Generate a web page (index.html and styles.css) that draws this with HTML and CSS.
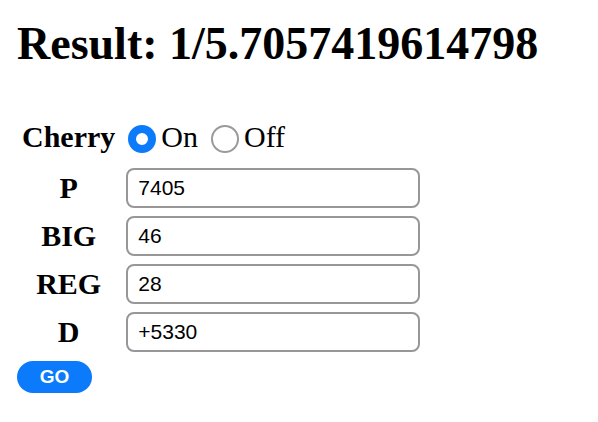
FILE: index.html
```html
<!DOCTYPE html>
<html>
<head>
<meta charset="utf-8">
<link rel="stylesheet" href="styles.css">
</head>
<body>
<h1 class="result">Result: 1/5.7057419614798</h1>
<form class="form">
  <div class="label">Cherry</div>
  <div class="radios">
    <span class="radio radio-on"></span><span class="opt">On</span>
    <span class="radio radio-off"></span><span class="opt">Off</span>
  </div>
  <div class="label">P</div>
  <input class="field" type="text" value="7405">
  <div class="label">BIG</div>
  <input class="field" type="text" value="46">
  <div class="label">REG</div>
  <input class="field" type="text" value="28">
  <div class="label">D</div>
  <input class="field" type="text" value="+5330">
</form>
<button class="go" type="button">GO</button>
</body>
</html>
```
FILE: styles.css
```css
html, body {
  margin: 0;
  background: #ffffff;
}
body {
  padding: 0 17px;
  font-family: "Liberation Serif", "Times New Roman", serif;
  color: #000;
}
.result {
  margin: 18px 0 0 0;
  font-size: 46px;
  line-height: 52px;
  font-weight: bold;
}
.form {
  display: grid;
  grid-template-columns: auto auto;
  justify-content: start;
  align-items: center;
  column-gap: 11px;
  row-gap: 8px;
  margin: 44px 0 0 5px;
}
.label {
  font-size: 30px;
  font-weight: bold;
  line-height: 40px;
  text-align: center;
}
.radios {
  display: flex;
  align-items: center;
  height: 46px;
  font-size: 30px;
}
.radio {
  box-sizing: border-box;
  width: 28px;
  height: 28px;
  margin-top: 3px;
  border-radius: 50%;
  flex: none;
}
.radio-on {
  margin-left: 2px;
  border: 8px solid #0b7bfb;
  background: #fff;
}
.radio-off {
  margin-left: 13px;
  border: 2.5px solid #9a9a9a;
}
.opt {
  margin-left: 5px;
  line-height: 40px;
}
.field {
  box-sizing: border-box;
  width: 294px;
  height: 40px;
  margin: 0;
  padding: 0 10px;
  border: 2px solid #979797;
  border-radius: 8px;
  font-family: "Liberation Sans", Arial, sans-serif;
  font-size: 21px;
  color: #000;
  background: #fff;
  outline: none;
}
.go {
  display: block;
  margin-top: 9px;
  width: 75px;
  height: 32px;
  padding: 0;
  border: none;
  border-radius: 16px;
  background: #0b7bfb;
  color: #fff;
  font-family: "Liberation Sans", Arial, sans-serif;
  font-weight: bold;
  font-size: 19px;
}
```
